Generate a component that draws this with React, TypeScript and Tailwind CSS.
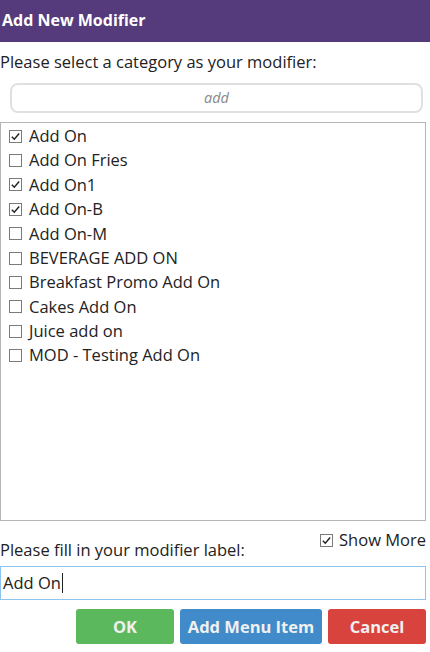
const categories = [
  { name: 'Add On', checked: true },
  { name: 'Add On Fries', checked: false },
  { name: 'Add On1', checked: true },
  { name: 'Add On-B', checked: true },
  { name: 'Add On-M', checked: false },
  { name: 'BEVERAGE ADD ON', checked: false },
  { name: 'Breakfast Promo Add On', checked: false },
  { name: 'Cakes Add On', checked: false },
  { name: 'Juice add on', checked: false },
  { name: 'MOD - Testing Add On', checked: false },
]

function Box({ checked }: { checked: boolean }) {
  return (
    <span className="flex h-[13px] w-[13px] shrink-0 items-center justify-center border border-[#7a7a7a] bg-white">
      {checked && (
        <svg viewBox="0 0 12 12" className="h-[11px] w-[11px]">
          <path d="M2 6.2 L4.7 9 L10 2.8" fill="none" stroke="#222" strokeWidth="1.6" />
        </svg>
      )}
    </span>
  )
}

export default function App() {
  return (
    <div className="flex h-[652px] w-[430px] flex-col bg-white text-[16.5px] text-[#222] [font-family:'Open_Sans',sans-serif]">
      {/* title bar */}
      <div className="flex h-[42px] shrink-0 items-center bg-[#553b7b] px-[2px] pb-[3px] text-[16px] font-bold text-white">
        Add New Modifier
      </div>

      <div className="mt-[9px] leading-[22px]">Please select a category as your modifier:</div>

      {/* search */}
      <div className="mt-[10px] ml-[10px] mr-[7px] flex h-[30px] items-center justify-center rounded-[8px] border-2 border-[#e0e0e0] text-[14.5px] italic text-[#888]">
        add
      </div>

      {/* category list */}
      <div className="mt-[9px] mr-[4px] flex h-[399px] flex-col border border-[#b5b5b5] pt-[1px]">
        {categories.map((c) => (
          <label key={c.name} className="flex h-[24.4px] items-center gap-[7px] pl-[8px]">
            <Box checked={c.checked} />
            <span className="leading-none">{c.name}</span>
          </label>
        ))}
      </div>

      {/* label + show more */}
      <div className="flex h-[45px] items-start justify-between pr-[4px]">
        <span className="pt-[18px] leading-[22px]">Please fill in your modifier label:</span>
        <span className="flex items-center gap-[6px] pt-[8px] leading-[22px]">
          <Box checked />
          Show More
        </span>
      </div>

      <div className="mr-[4px] flex h-[34px] items-center border border-[#8ec5ef] px-[2px]">
        Add On<span className="ml-[1px] h-[20px] w-px bg-[#222]" />
      </div>

      {/* buttons */}
      <div className="mt-[9px] flex justify-end gap-[6px] pr-[4px] text-[16.5px] font-bold text-[#f0f0f0]">
        <button className="h-[35px] w-[98px] rounded-[3px] bg-[#5cb85c] pt-[2px]">OK</button>
        <button className="h-[35px] w-[142px] rounded-[3px] bg-[#428bca] pt-[2px]">Add Menu Item</button>
        <button className="h-[35px] w-[98px] rounded-[3px] bg-[#d9433e] pt-[2px]">Cancel</button>
      </div>
    </div>
  )
}
